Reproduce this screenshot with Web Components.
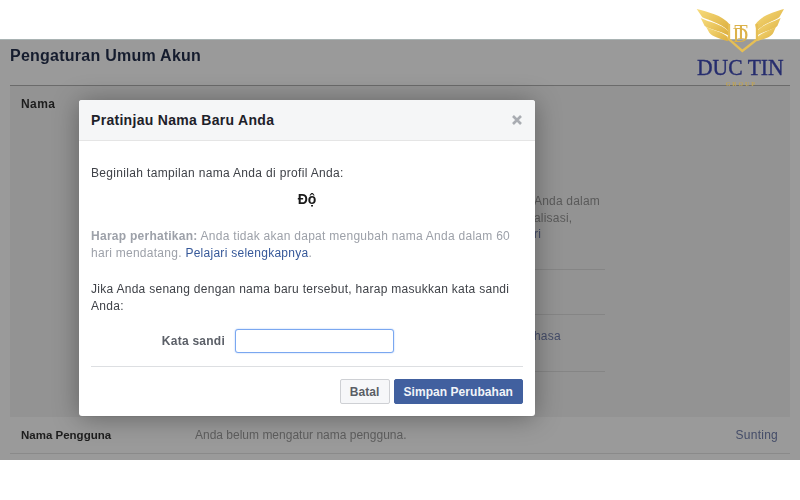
<!DOCTYPE html>
<html>
<head>
<meta charset="utf-8">
<title>Pengaturan Umum Akun</title>
<style>
  html, body { margin: 0; background: #fff; }
  body { width: 800px; height: 500px; overflow: hidden; position: relative; font-family: "Liberation Sans", Arial, sans-serif; }
</style>
</head>
<body>
<settings-page>
  <settings-row slot="rows" label="Nama" class="open">
    <div class="behind">
      <tail-text style="margin-top:97px">Anda dalam</tail-text>
      <tail-text>alisasi,</tail-text>
      <tail-text link>ri</tail-text>
      <tail-rule style="margin-top:26px"></tail-rule>
      <tail-rule style="margin-top:44px"></tail-rule>
      <tail-text link style="margin-top:13px">hasa</tail-text>
      <tail-rule style="margin-top:27px"></tail-rule>
    </div>
  </settings-row>
  <settings-row slot="rows" label="Nama Pengguna" action="Sunting" class="plain">Anda belum mengatur nama pengguna.</settings-row>
</settings-page>
<duc-logo></duc-logo>
<name-dialog heading="Pratinjau Nama Baru Anda">
  <p>Beginilah tampilan nama Anda di profil Anda:</p>
  <preview-name>Độ</preview-name>
  <p class="note"><b>Harap perhatikan:</b> Anda tidak akan dapat mengubah nama Anda dalam 60<br>hari mendatang. <a>Pelajari selengkapnya</a>.</p>
  <p class="ask">Jika Anda senang dengan nama baru tersebut, harap masukkan kata sandi<br>Anda:</p>
  <password-field label="Kata sandi"></password-field>
  <fb-button slot="actions">Batal</fb-button>
  <fb-button slot="actions" primary>Simpan Perubahan</fb-button>
</name-dialog>

<script>
class SettingsPage extends HTMLElement {
  constructor () {
    super()
    this.attachShadow({ mode: 'open' }).innerHTML = `
      <style>
        :host { display: block; margin-top: 39px; height: 421px; background: #9a9a9a; border-top: 1px solid #a9b3b3; box-sizing: border-box; padding: 0 10px; filter: blur(.3px); }
        h1 { margin: 0; height: 46px; padding-top: 6px; box-sizing: border-box; border-bottom: 1px solid #6b6b6b; font: bold 16px/20px "Liberation Sans", Arial, sans-serif; letter-spacing: .25px; color: #151c2e; }
      </style>
      <h1>Pengaturan Umum Akun</h1>
      <slot name="rows"></slot>`
  }
}

class SettingsRow extends HTMLElement {
  constructor () {
    super()
    this.attachShadow({ mode: 'open' }).innerHTML = `
      <style>
        :host { display: flex; box-sizing: border-box; padding: 10px 12px 0 11px; font-size: 12px; line-height: 17px; color: #5e5e5e; }
        :host(.open) { height: 331px; background: #939393; }
        :host(.open) .label { font-size: 12px; letter-spacing: .4px; }
        :host(.plain) { height: 37px; padding-top: 10px; border-bottom: 1px solid #8a8a8a; }
        .label { width: 174px; flex: none; font-weight: bold; color: #1d1d1d; font-size: 11.5px; }
        .main { flex: 1; }
        .action { color: #444c68; letter-spacing: .25px; }
      </style>
      <div class="label"></div>
      <div class="main"><slot></slot></div>
      <div class="action"></div>`
    this.shadowRoot.querySelector('.label').textContent = this.getAttribute('label')
    this.shadowRoot.querySelector('.action').textContent = this.getAttribute('action') || ''
  }
}

class TailText extends HTMLElement {
  constructor () {
    super()
    this.attachShadow({ mode: 'open' }).innerHTML = `
      <style>
        :host { display: block; padding-left: 339px; font-size: 12px; line-height: 16.5px; letter-spacing: .2px; color: #5a5a5a; white-space: nowrap; }
        :host([link]) { color: #444c68; }
      </style>
      <slot></slot>`
  }
}

class TailRule extends HTMLElement {
  constructor () {
    super()
    this.attachShadow({ mode: 'open' }).innerHTML = `
      <style>
        :host { display: block; width: 410px; height: 1px; background: #858585; }
      </style>`
  }
}

class DucLogo extends HTMLElement {
  constructor () {
    super()
    this.attachShadow({ mode: 'open' }).innerHTML = `
      <style>
        :host { position: absolute; left: 660px; top: 0; width: 140px; height: 100px; display: block; filter: blur(.3px); }
        svg { display: block; }
        text { text-anchor: middle; }
      </style>
      <svg width="140" height="100" viewBox="0 0 420 300">
        <defs>
          <linearGradient id="gold" x1="0" y1="0" x2="1" y2="1">
            <stop offset="0" stop-color="#f7dc7c"/>
            <stop offset="1" stop-color="#dcae3e"/>
          </linearGradient>
        </defs>
        <g fill="url(#gold)">
          <path d="M110 27C142 36 186 44 210 74L205 92C178 68 148 62 127 52Z"/>
          <path d="M122 54C150 68 180 70 204 92L204 106C178 92 150 88 134 78Z"/>
          <path d="M138 80C160 92 184 94 203 110L205 124C180 116 158 110 148 98Z"/>
          <path d="M372 27C342 36 308 44 285 74L290 92C316 68 346 62 358 52Z"/>
          <path d="M362 54C336 68 314 70 292 92L292 106C318 92 342 88 352 78Z"/>
          <path d="M348 80C330 92 312 94 293 110L291 124C316 116 334 110 340 98Z"/>
        </g>
        <path d="M207 72V118L247 153L291 118V72" fill="none" stroke="#e6bf55" stroke-width="7"/>
        <text x="243 241" y="116 125" font-family="Liberation Serif, serif" font-size="66" fill="#dcb24a">TD</text>
        <text x="241" y="224" font-family="Liberation Serif, serif" font-size="70" textLength="260" lengthAdjust="spacingAndGlyphs" fill="#262d6e" stroke="#262d6e" stroke-width="1.2">DUC TIN</text>
        <text x="241" y="258" font-family="Liberation Serif, serif" font-weight="bold" font-size="18" textLength="88" fill="#c0a455">GROUP</text>
      </svg>`
  }
}

class NameDialog extends HTMLElement {
  constructor () {
    super()
    this.attachShadow({ mode: 'open' }).innerHTML = `
      <style>
        :host { position: absolute; left: 79px; top: 100px; width: 456px; height: 316px; display: flex; flex-direction: column; box-sizing: border-box; background: #fff; border-radius: 3px; box-shadow: 0 2px 26px rgba(0,0,0,.35); color: #3a3d44; font-size: 12px; filter: blur(.3px); }
        header { height: 41px; flex: none; display: flex; align-items: center; justify-content: space-between; box-sizing: border-box; padding: 0 12px; background: #f5f6f7; border-bottom: 1px solid #e5e5e5; border-radius: 3px 3px 0 0; }
        h2 { margin: 0; font: bold 14px/20px "Liberation Sans", Arial, sans-serif; letter-spacing: .3px; color: #1d2129; }
        svg { display: block; }
        .body { flex: 1; padding: 24px 12px 0; }
        footer { margin: 0 12px; height: 50px; flex: none; display: flex; justify-content: flex-end; align-items: flex-start; gap: 4px; box-sizing: border-box; padding-top: 12px; border-top: 1px solid #dddfe2; }
      </style>
      <header>
        <h2></h2>
        <svg width="12" height="12" viewBox="0 0 12 12"><path d="M2 2L10 10M10 2L2 10" stroke="#a9acb2" stroke-width="2.6"/></svg>
      </header>
      <div class="body"><slot></slot></div>
      <footer><slot name="actions"></slot></footer>`
    this.shadowRoot.querySelector('h2').textContent = this.getAttribute('heading')
  }

  connectedCallback () {
    // paragraphs are light DOM, style them from here
    if (document.getElementById('dialog-text')) return
    var s = document.createElement('style')
    s.id = 'dialog-text'
    s.textContent = `
      name-dialog p { margin: 0 0 15px; font-size: 12px; line-height: 17px; letter-spacing: .33px; color: #3f4248; }
      name-dialog p.note { color: #9da1a9; margin-bottom: 19px; letter-spacing: .27px; }
      name-dialog p.ask { letter-spacing: .28px; }
      name-dialog p a { color: #365899; }`
    document.head.appendChild(s)
  }
}

class PreviewName extends HTMLElement {
  constructor () {
    super()
    this.attachShadow({ mode: 'open' }).innerHTML = `
      <style>
        :host { display: block; text-align: center; font-weight: bold; font-size: 14px; line-height: 18px; color: #1a1a1a; margin: -7px 0 20px; }
      </style>
      <slot></slot>`
  }
}

class PasswordField extends HTMLElement {
  constructor () {
    super()
    this.attachShadow({ mode: 'open' }).innerHTML = `
      <style>
        :host { display: flex; align-items: center; gap: 10px; margin-top: -1px; }
        label { width: 134px; text-align: right; font: bold 12px "Liberation Sans", Arial, sans-serif; letter-spacing: .25px; color: #5c6068; }
        input { width: 159px; height: 24px; box-sizing: border-box; margin: 0; padding: 0 4px; border: 1px solid #7aa7f0; border-radius: 3px; box-shadow: 0 0 1.5px #8db6f5; outline: none; background: #fff; }
      </style>
      <label></label>
      <input type="password">`
    this.shadowRoot.querySelector('label').textContent = this.getAttribute('label')
  }
}

class FbButton extends HTMLElement {
  constructor () {
    super()
    this.attachShadow({ mode: 'open' }).innerHTML = `
      <style>
        :host { display: flex; align-items: center; justify-content: center; height: 25px; box-sizing: border-box; padding: 0 9px; border: 1px solid #ced0d4; border-radius: 2px; background: #f6f7f9; color: #5a5e66; font: bold 12px "Liberation Sans", Arial, sans-serif; letter-spacing: .1px; white-space: nowrap; }
        :host([primary]) { background: #41609f; border-color: #41609f; color: #f2f4f8; letter-spacing: .05px; }
      </style>
      <slot></slot>`
  }
}

customElements.define('settings-page', SettingsPage)
customElements.define('settings-row', SettingsRow)
customElements.define('tail-text', TailText)
customElements.define('tail-rule', TailRule)
customElements.define('duc-logo', DucLogo)
customElements.define('name-dialog', NameDialog)
customElements.define('preview-name', PreviewName)
customElements.define('password-field', PasswordField)
customElements.define('fb-button', FbButton)
</script>
</body>
</html>
